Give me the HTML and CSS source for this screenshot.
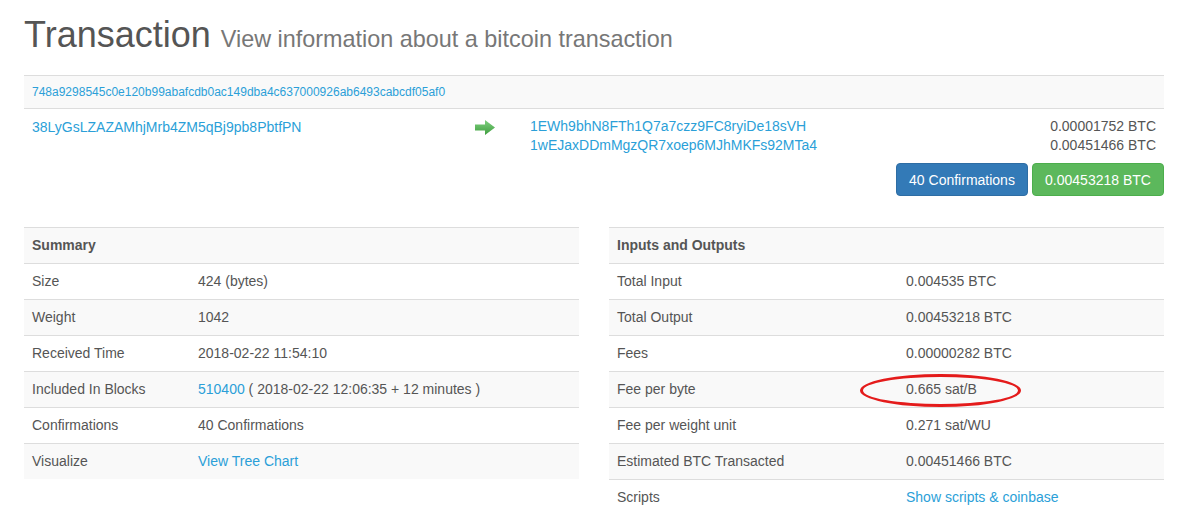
FILE: index.html
```html
<!DOCTYPE html>
<html lang="en">
<head>
    <meta charset="UTF-8">
    <title>Bitcoin Transaction</title>
    <link rel="stylesheet" href="styles.css">
</head>
<body>
    <div class="container">
        <!-- Page title -->
        <h1 class="page-title">Transaction <small>View information about a bitcoin transaction</small></h1>

        <!-- Hash + inputs/outputs -->
        <div class="tx-hash">
            <a href="#">748a9298545c0e120b99abafcdb0ac149dba4c637000926ab6493cabcdf05af0</a>
        </div>

        <div class="tx-row">
            <div class="tx-from">
                <a href="#">38LyGsLZAZAMhjMrb4ZM5qBj9pb8PbtfPN</a>
            </div>
            <div class="tx-arrow">
                <svg width="20" height="15" viewBox="0 0 20 15">
                    <defs>
                        <linearGradient id="arrowGrad" x1="0" y1="0" x2="0" y2="1">
                            <stop offset="0" stop-color="#7fd07f"/>
                            <stop offset="1" stop-color="#3f9e3f"/>
                        </linearGradient>
                    </defs>
                    <path d="M0 4.5 H10 V0 L20 7.5 L10 15 V10.5 H0 Z" fill="url(#arrowGrad)"/>
                </svg>
            </div>
            <div class="tx-to">
                <div class="tx-out">
                    <a href="#">1EWh9bhN8FTh1Q7a7czz9FC8ryiDe18sVH</a>
                    <span>0.00001752 BTC</span>
                </div>
                <div class="tx-out">
                    <a href="#">1wEJaxDDmMgzQR7xoep6MJhMKFs92MTa4</a>
                    <span>0.00451466 BTC</span>
                </div>
            </div>
        </div>

        <div class="tx-buttons">
            <button class="btn btn-primary">40 Confirmations</button>
            <button class="btn btn-success">0.00453218 BTC</button>
        </div>

        <!-- Detail tables -->
        <div class="tables">
            <table class="info-table summary">
                <tr><th colspan="2">Summary</th></tr>
                <tr><td>Size</td><td>424 (bytes)</td></tr>
                <tr><td>Weight</td><td>1042</td></tr>
                <tr><td>Received Time</td><td>2018-02-22 11:54:10</td></tr>
                <tr><td>Included In Blocks</td><td><a href="#">510400</a> ( 2018-02-22 12:06:35 + 12 minutes )</td></tr>
                <tr><td>Confirmations</td><td>40 Confirmations</td></tr>
                <tr><td>Visualize</td><td><a href="#">View Tree Chart</a></td></tr>
            </table>

            <table class="info-table io">
                <tr><th colspan="2">Inputs and Outputs</th></tr>
                <tr><td>Total Input</td><td>0.004535 BTC</td></tr>
                <tr><td>Total Output</td><td>0.00453218 BTC</td></tr>
                <tr><td>Fees</td><td>0.00000282 BTC</td></tr>
                <tr><td>Fee per byte</td><td class="marked">0.665 sat/B<span class="circle"></span></td></tr>
                <tr><td>Fee per weight unit</td><td>0.271 sat/WU</td></tr>
                <tr><td>Estimated BTC Transacted</td><td>0.00451466 BTC</td></tr>
                <tr><td>Scripts</td><td><a href="#">Show scripts &amp; coinbase</a></td></tr>
            </table>
        </div>
    </div>
</body>
</html>
```

FILE: styles.css
```css
* {
    margin: 0;
    padding: 0;
    box-sizing: border-box;
}

body {
    background: #fff;
    font-family: "Liberation Sans", Arial, sans-serif;
    font-size: 14px;
    line-height: 20px;
    color: #555;
}

a {
    color: #2b9fd8;
    text-decoration: none;
}

.container {
    width: 1140px;
    margin-left: 24px;
}

.page-title {
    font-size: 36px;
    font-weight: normal;
    line-height: 40px;
    color: #555;
    padding-top: 15px;
    margin-bottom: 16px;
}

.page-title small {
    font-size: 23.4px;
    color: #777;
}

.tx-hash {
    background: #f9f9f9;
    border-top: 1px solid #ddd;
    border-bottom: 1px solid #ddd;
    padding: 7px 8px;
    font-size: 12px;
    line-height: 18px;
}

.tx-row {
    display: flex;
    padding: 8px 8px 0 8px;
}

.tx-from {
    width: 442px;
}

.tx-arrow {
    width: 56px;
    padding-top: 3px;
    padding-left: 1px;
}

.tx-to {
    flex: 1;
}

.tx-out {
    display: flex;
    justify-content: space-between;
    line-height: 19px;
}

.tx-buttons {
    display: flex;
    justify-content: flex-end;
    gap: 4px;
    margin-top: 8px;
}

.btn {
    font-family: "Liberation Sans", Arial, sans-serif;
    font-size: 14px;
    line-height: 20px;
    padding: 6px 12px;
    border: 1px solid transparent;
    border-radius: 4px;
    color: #fff;
    width: 132px;
    height: 33px;
}

.btn-primary {
    background: #337ab7;
    border-color: #2e6da4;
}

.btn-success {
    background: #5cb85c;
    border-color: #4cae4c;
}

.tables {
    display: flex;
    align-items: flex-start;
    gap: 30px;
    margin-top: 31px;
}

.info-table {
    width: 555px;
    border-collapse: collapse;
}

.info-table th,
.info-table td {
    border-top: 1px solid #ddd;
    padding: 8px;
    line-height: 19px;
    text-align: left;
    vertical-align: top;
}

.info-table th {
    font-weight: bold;
}

.info-table tr:nth-child(odd) {
    background: #f9f9f9;
}

.summary td:first-child {
    width: 166px;
}

.io td:first-child {
    width: 289px;
}

.marked {
    position: relative;
}

/* red ellipse drawn over the fee value */
.circle {
    position: absolute;
    left: -38px;
    top: 2px;
    width: 161px;
    height: 33px;
    border: 3.5px solid #e41b1b;
    border-radius: 50%;
}
```
